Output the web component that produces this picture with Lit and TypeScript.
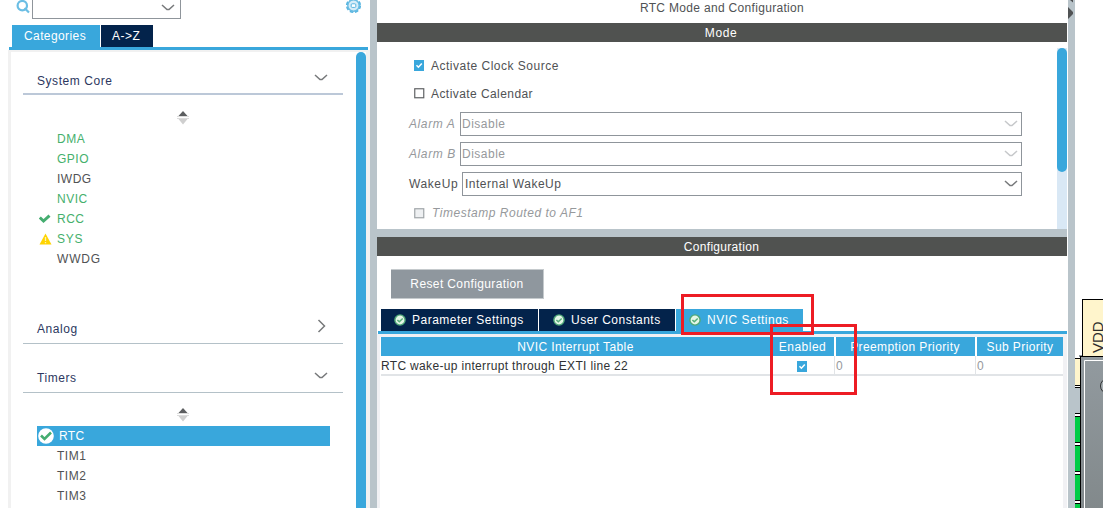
import { LitElement, html, css, svg } from "lit";
import { customElement } from "lit/decorators.js";

const chevron = (cls: string) => html`<svg class="chev ${cls}" width="14" height="10" viewBox="0 0 14 10"><path d="M1 2L6 6.5H8L13 2" /></svg>`;

const sorter = html`<svg class="sorter" width="12" height="16" viewBox="0 0 12 16">
  <path d="M6 1L10.5 6H1.5Z" fill="#5c5e60" /><path d="M0 6.5H12M0 8.5H12" stroke="#dcdcdc" /><path d="M1.5 9H10.5L6 14.5Z" fill="#cfcfcf" /></svg>`;

const badge = html`<svg class="badge" width="12" height="12" viewBox="0 0 12 12"><circle cx="6" cy="6" r="5.1" fill="#e4f6e6" stroke="#4fa878" stroke-width="1.4" /><path d="M3.4 6L5.3 7.8L8.7 4.5" fill="none" stroke="#58ad7a" stroke-width="1.5" /></svg>`;

const check = (state: string) => html`<svg class="check" width="11" height="11" viewBox="0 0 11 11">${
  state === "on"
    ? svg`<rect width="10" height="11" fill="#39a7dc" /><path d="M2.5 5.2L4.4 7.2L7.8 3.4" fill="none" stroke="#fff" stroke-width="1.5" />`
    : state === "off"
      ? svg`<rect x=".75" y=".75" width="9" height="9" fill="#fff" stroke="#606264" stroke-width="1.2" />`
      : svg`<rect x=".75" y=".75" width="9" height="9" fill="#eef0f2" stroke="#a0a5a9" stroke-width="1.2" />`
}</svg>`;

const pins = [
  { top: 358, end: 386, fill: "#fff5cc" },
  { top: 387, end: 414, fill: "#b9c4ca" },
  { top: 416, end: 443, fill: "#00cc44" },
  { top: 445, end: 472, fill: "#00cc44" },
  { top: 474, end: 501, fill: "#00cc44" },
  { top: 503, end: 530, fill: "#00cc44" },
];

@customElement("app-root")
export class AppRoot extends LitElement {
  static styles = css`
    :host { display: block; position: relative; width: 1103px; height: 508px; overflow: hidden; background: #fff; font: 12px/20px "Liberation Sans", Arial, sans-serif; letter-spacing: 0.5px; color: #505254; white-space: nowrap; }
    * { box-sizing: border-box; }
    svg { display: block; flex: none; }
    .page { display: grid; grid-template-columns: 370px 7px 691px 7px 28px; height: 508px; }
    .split { background: #b9c4ca; }
    .chev path { fill: none; stroke: #77797b; stroke-width: 1.5; }
    .chev.dim path { stroke: #c6c8ca; }
    .left { display: flex; flex-direction: column; overflow: hidden; }
    .search { display: flex; height: 25px; padding-left: 16px; align-items: flex-start; }
    .find { width: 149px; height: 19px; border: 1px solid #8f959b; border-top: 0; display: flex; justify-content: flex-end; padding: 3px 5px 0 0; }
    .glass { margin-right: 2px; }
    .gear { margin-left: 164px; }
    .tabs { display: flex; gap: 1px; height: 22px; color: #fff; line-height: 23px; }
    .ltabs { padding-left: 12px; }
    .tab { background: #03234b; display: flex; align-items: center; }
    .tab.sel { background: #39a7dc; }
    .lcat { width: 88px; padding-left: 12px; letter-spacing: 0.4px; }
    .laz { width: 52px; padding-left: 11px; }
    .rule { height: 3px; background: #39a7dc; flex: none; }
    .lrule { margin: 0 2px 0 9px; }
    .tree { display: flex; flex: 1; margin-left: 8px; border-left: 3px solid #f1f1f1; border-top: 2px solid #f1f1f1; }
    .groups { flex: 1; padding-left: 12px; display: flex; flex-direction: column; }
    .lbar { width: 10px; background: #39a7dc; border-radius: 5px 5px 0 0; }
    .ledge { width: 4px; background: #f1f1f1; }
    .head { width: 320px; border-bottom: 1px solid #b4c1c8; display: flex; justify-content: space-between; padding: 0 15px 0 14px; color: #2c3760; flex: none; letter-spacing: 0.55px; }
    .h1 { height: 43px; padding-top: 19px; border-bottom: 2px solid #bcc8d8; }
    .h2 { height: 27px; padding-top: 2px; margin-top: 48px; }
    .h3 { height: 49px; padding-top: 24px; }
    .h1 .chev { margin-top: 2px; } .h2 .chev { margin: 0 1px 0 0; } .h3 .chev { margin-top: 3px; }
    .sorter { margin: 15px 0 3px 154px; }
    .s2 .sorter { margin: 14px 0 3px 154px; }
    .item { height: 20px; width: 293px; margin-left: 14px; display: flex; align-items: center; }
    .ico { width: 20px; padding-left: 2px; flex: none; }
    .green { color: #45b06c; }
    .item.wide { letter-spacing: 0.8px; }
    .item.cur { background: #39a7dc; color: #fff; letter-spacing: 0.3px; }
    .item.cur .ico { width: 22px; padding-left: 1px; }
    .item.low { line-height: 22px; }
    .mid { display: flex; flex-direction: column; padding-right: 1px; overflow: hidden; }
    .title { height: 23px; line-height: 16px; text-align: center; letter-spacing: 0.32px; }
    .bar { height: 19px; line-height: 20px; background: #505250; color: #fff; text-align: center; flex: none; padding-right: 1px; }
    .bar.m { letter-spacing: 0.6px; padding-right: 2px; }
    .bar.c { letter-spacing: 0.3px; }
    .mode { height: 187px; display: flex; }
    .form { flex: 1; display: flex; flex-direction: column; padding: 14px 0 0 32px; }
    .opt { display: flex; height: 28px; line-height: 20px; padding-left: 5px; gap: 6px; }
    .opt + .opt { height: 29px; padding-top: 1px; letter-spacing: 0.43px; }
    .opt .check { margin-top: 4px; }
    .opt.ts { padding-top: 1px; letter-spacing: 0.52px; gap: 7px; }
    .opt.ts .check { margin-top: 5px; }
    .row { display: flex; align-items: center; height: 24px; margin-bottom: 6px; width: 613px; flex: none; }
    .row .lab { flex: none; width: 51px; letter-spacing: 0.6px; }
    .row .lab.w { width: 53px; }
    .dim, .dim .lab { color: #96999c; }
    .it { font-style: italic; }
    .combo { flex: 1; height: 24px; border: 1px solid #8f959b; display: flex; align-items: center; justify-content: space-between; padding: 1px 3px 0 1px; }
    .combo.w { padding-left: 2px; }
    .mbar { width: 10px; margin-top: 6px; background: #d9e8f5; }
    .thumb { height: 124px; border-radius: 5px; background: #39a7dc; }
    .hsplit { height: 8px; background: #b9c4ca; flex: none; }
    .reset { width: 153px; height: 30px; margin: 13px 0 10px 14px; background: #8f979e; border: 1px solid #c5cacd; color: #fff; text-align: center; line-height: 29px; flex: none; border-left: 0; letter-spacing: 0.38px; }
    .ctabs { padding-left: 4px; flex: none; }
    .ctabs .tab { gap: 6px; padding-left: 13px; }
    .t1 { width: 157px; } .ctabs .t2 { width: 136px; padding-left: 14px; } .t3 { width: 127px; }
    .crule { margin-left: 1px; }
    .conf { flex: 1; border: solid #f1f1f4; border-width: 3px 4px 0 3px; padding-left: 1px; }
    .cols { display: grid; grid-template-columns: 389px 64px 141px 88px; }
    .thead { background: #39a7dc; color: #fff; height: 19px; text-align: center; line-height: 20px; letter-spacing: 0.4px; width: 682px; }
    .thead > div + div { border-left: 2px solid #fff; }
    .thead > div:nth-child(2) { border-left: 0; letter-spacing: 0.5px; padding-left: 1px; }
    .thead > div:nth-child(3) { padding-right: 1px; }
    .tr { height: 20px; border-bottom: 2px solid #e1e4e7; line-height: 21px; color: #303234; letter-spacing: 0.33px; }
    .tr .num { color: #96999c; border-left: 1px solid #e1e4e7; padding-left: 1px; height: 18px; }
    .tr .check { margin: 5px 0 0 27px; }
    .chip { background: #fff; overflow: hidden; font-size: 15px; letter-spacing: 0; }
    .mark { position: absolute; border: 3px solid #ed1c24; }
    .m1 { left: 681px; top: 294px; width: 133px; height: 41px; }
    .m2 { left: 770px; top: 324px; width: 87px; height: 71px; }
  `;

  item(name: string, cls = "", ico: unknown = "") {
    return html`<div class="item ${cls}"><span class="ico">${ico}</span><span>${name}</span></div>`;
  }

  render() {
    const tick = html`<svg width="13" height="12" viewBox="0 0 13 12"><path d="M.8 4.5L4.5 8L10.5 2.6" fill="none" stroke="#45ad70" stroke-width="3" /></svg>`;
    const warn = html`<svg width="13" height="12" viewBox="0 0 13 12"><path d="M6.5 .5L12.5 11.5H.5Z" fill="#ffd400" /><path d="M6.5 4V8M6.5 9V10.3" stroke="#fff3b0" stroke-width="1.3" /></svg>`;
    const done = html`<svg width="16" height="16" viewBox="0 0 16 16"><circle cx="8" cy="8" r="7.8" fill="#fff" /><path d="M3 7.5L6.5 11L13 4.5" fill="none" stroke="#45ad70" stroke-width="2.6" /></svg>`;
    return html`
      <div class="page">
        <div class="left">
          <div class="search">
            <svg class="glass" width="14" height="14" viewBox="0 0 14 14"><circle cx="6.3" cy="5.7" r="4.7" fill="none" stroke="#6bbee4" stroke-width="2.2" /><path d="M8.5 8L13 12.5" stroke="#6bbee4" stroke-width="2.2" /></svg>
            <div class="find">${chevron("")}</div>
            <svg class="gear" width="17" height="14" viewBox="0 0 17 14"><circle cx="8.5" cy="5.5" r="6.5" fill="#d5ecf8" stroke="#55b4e0" stroke-width="2.2" stroke-dasharray="3.4 1.7" /><circle cx="8.5" cy="5.5" r="5.7" fill="none" stroke="#6bbde3" stroke-width="1.4" /><rect x="6.2" y="3.8" width="4.6" height="3.6" rx="1" fill="#fff" stroke="#55b4e0" /></svg>
          </div>
          <div class="tabs ltabs"><div class="tab sel lcat">Categories</div><div class="tab laz">A-&gt;Z</div></div>
          <div class="rule lrule"></div>
          <div class="tree">
            <div class="groups">
              <div class="head h1"><span>System Core</span>${chevron("")}</div>
              ${sorter}
              ${this.item("DMA", "green")}${this.item("GPIO", "green")}${this.item("IWDG")}${this.item("NVIC", "green")}
              ${this.item("RCC", "green", tick)}${this.item("SYS", "green wide", warn)}${this.item("WWDG", "wide")}
              <div class="head h2"><span>Analog</span><svg class="chev" width="10" height="14" viewBox="0 0 10 14"><path d="M1.5 1L7.5 7L1.5 13" /></svg></div>
              <div class="head h3"><span>Timers</span>${chevron("")}</div>
              <div class="s2">${sorter}</div>
              ${this.item("RTC", "cur low", done)}${this.item("TIM1", "low")}${this.item("TIM2", "low")}${this.item("TIM3", "low")}
            </div>
            <div class="lbar"></div><div class="ledge"></div>
          </div>
        </div>
        <div class="split"></div>
        <div class="mid">
          <div class="title">RTC Mode and Configuration</div>
          <div class="bar m">Mode</div>
          <div class="mode">
            <div class="form">
              <div class="opt">${check("on")}<span>Activate Clock Source</span></div>
              <div class="opt">${check("off")}<span>Activate Calendar</span></div>
              <div class="row dim"><span class="lab it">Alarm A</span><div class="combo">Disable${chevron("dim")}</div></div>
              <div class="row dim"><span class="lab it">Alarm B</span><div class="combo">Disable${chevron("dim")}</div></div>
              <div class="row"><span class="lab w">WakeUp</span><div class="combo w">Internal WakeUp${chevron("")}</div></div>
              <div class="opt dim it ts">${check("dis")}<span>Timestamp Routed to AF1</span></div>
            </div>
            <div class="mbar"><div class="thumb"></div></div>
          </div>
          <div class="hsplit"></div>
          <div class="bar c">Configuration</div>
          <div class="reset">Reset Configuration</div>
          <div class="tabs ctabs">
            <div class="tab t1">${badge}<span>Parameter Settings</span></div>
            <div class="tab t2">${badge}<span>User Constants</span></div>
            <div class="tab sel t3">${badge}<span>NVIC Settings</span></div>
          </div>
          <div class="rule crule"></div>
          <div class="conf">
            <div class="cols thead"><div>NVIC Interrupt Table</div><div>Enabled</div><div>Preemption Priority</div><div>Sub Priority</div></div>
            <div class="cols tr"><div>RTC wake-up interrupt through EXTI line 22</div><div>${check("on")}</div><div class="num">0</div><div class="num">0</div></div>
          </div>
        </div>
        <div class="split"><svg width="7" height="20" viewBox="0 0 7 20"><path d="M5 0V2.5L2 0ZM0 7L5 12V14L0 19Z" fill="#505254" /></svg></div>
        <svg class="chip" width="28" height="508" viewBox="1075 0 28 508">
          <defs><linearGradient id="body" x1="0" y1="0" x2="0" y2="1"><stop offset="0" stop-color="#929a9f" /><stop offset="1" stop-color="#808789" /></linearGradient></defs>
          <rect x="1082.5" y="299.5" width="40" height="70" fill="#fff5cc" stroke="#000" />
          <text transform="translate(1102.7 353) rotate(-90)" fill="#2c2c2c">VDD</text>
          ${pins.map((p) => svg`<rect x="1070.5" y=${p.top + 0.5} width="10" height=${p.end - p.top - 1} fill=${p.fill} stroke="#000" />`)}
          <rect x="1079" y="355" width="3" height="2" fill="#8f979c" />
          <rect x="1080.5" y="356.5" width="60" height="170" fill="url(#body)" stroke="#000" />
          <path d="M1084.5 508V360.5H1103" fill="none" stroke="#fff" />
          <circle cx="1108" cy="386" r="7.5" fill="#a9b1b5" stroke="#303234" />
        </svg>
      </div>
      <div class="mark m1"></div><div class="mark m2"></div>
    `;
  }
}
